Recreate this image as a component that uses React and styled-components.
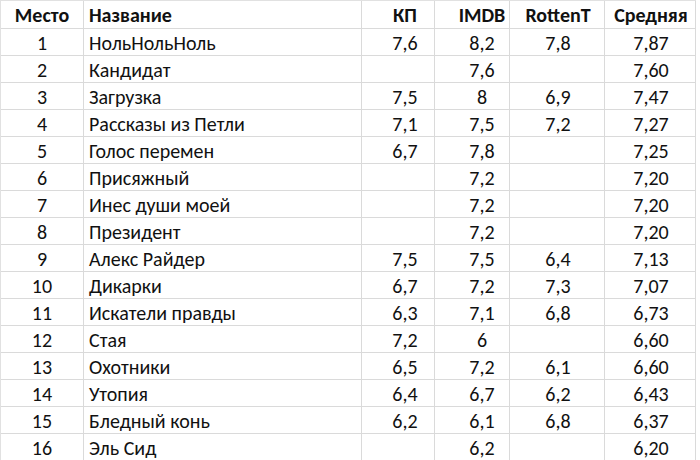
import React from "react";
import styled, { createGlobalStyle } from "styled-components";

const GlobalStyle = createGlobalStyle`
  body {
    margin: 0;
    background: #ffffff;
    font-family: Carlito, Lato, "Noto Sans", sans-serif;
  }
`;

const rows = [
  ["1", "НольНольНоль", "7,6", "8,2", "7,8", "7,87"],
  ["2", "Кандидат", "", "7,6", "", "7,60"],
  ["3", "Загрузка", "7,5", "8", "6,9", "7,47"],
  ["4", "Рассказы из Петли", "7,1", "7,5", "7,2", "7,27"],
  ["5", "Голос перемен", "6,7", "7,8", "", "7,25"],
  ["6", "Присяжный", "", "7,2", "", "7,20"],
  ["7", "Инес души моей", "", "7,2", "", "7,20"],
  ["8", "Президент", "", "7,2", "", "7,20"],
  ["9", "Алекс Райдер", "7,5", "7,5", "6,4", "7,13"],
  ["10", "Дикарки", "6,7", "7,2", "7,3", "7,07"],
  ["11", "Искатели правды", "6,3", "7,1", "6,8", "6,73"],
  ["12", "Стая", "7,2", "6", "", "6,60"],
  ["13", "Охотники", "6,5", "7,2", "6,1", "6,60"],
  ["14", "Утопия", "6,4", "6,7", "6,2", "6,43"],
  ["15", "Бледный конь", "6,2", "6,1", "6,8", "6,37"],
  ["16", "Эль Сид", "", "6,2", "", "6,20"],
];

const headers = ["Место", "Название", "КП", "IMDB", "RottenT", "Средняя"];

// alignment and nudge of each column, so the text sits where the sheet had it
const columns = [
  { align: "center", shift: 0 },
  { align: "left", shift: 5 },
  { align: "center", shift: 14 },
  { align: "center", shift: 20 },
  { align: "center", shift: 2 },
  { align: "center", shift: 2 },
];

const Sheet = styled.div`
  display: grid;
  grid-template-columns: 83px 278px 73px 75px 95px 91px;
  grid-auto-rows: 27px;
  grid-template-rows: 28px;
  width: max-content;
  border-top: 1px solid #e1e1e1;
  border-left: 1px solid #e1e1e1;
  box-sizing: border-box;
`;

const Cell = styled.div`
  display: flex;
  align-items: center;
  justify-content: ${(p) => (p.$align === "left" ? "flex-start" : "center")};
  padding-left: ${(p) => p.$shift}px;
  padding-top: 1px;
  box-sizing: border-box;
  border-right: 1px solid #dadada;
  border-bottom: 1px solid #dadada;
  font-size: 20px;
  font-weight: ${(p) => (p.$head ? 700 : 400)};
  color: #111;
  white-space: nowrap;
  overflow: hidden;
`;

export default function App() {
  return (
    <>
      <GlobalStyle />
      <Sheet>
        {headers.map((h, i) => (
          <Cell key={h} $head $align={columns[i].align} $shift={columns[i].shift}>
            {h}
          </Cell>
        ))}
        {rows.map((row) =>
          row.map((v, i) => (
            <Cell key={row[0] + "-" + i} $align={columns[i].align} $shift={columns[i].shift}>
              {v}
            </Cell>
          ))
        )}
      </Sheet>
    </>
  );
}
